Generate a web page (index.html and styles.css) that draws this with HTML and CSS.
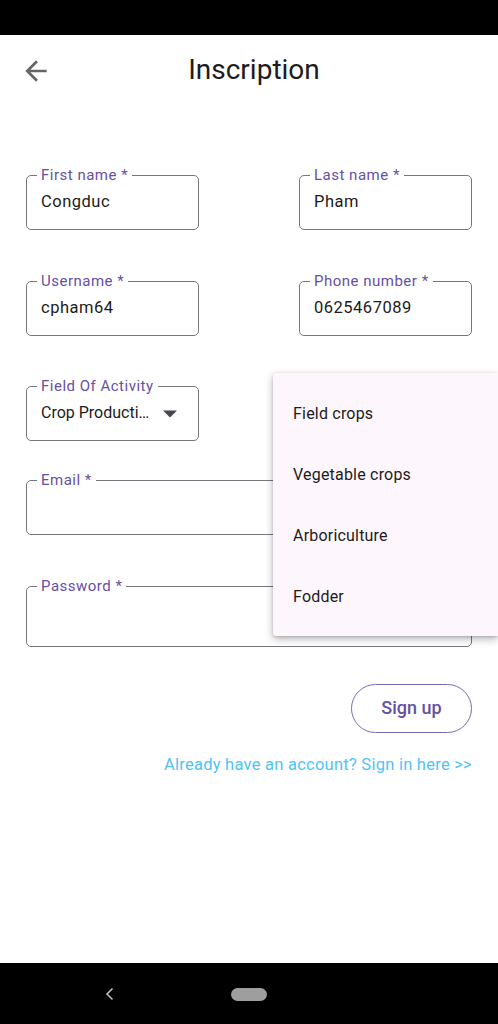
FILE: index.html
```html
<!DOCTYPE html>
<html lang="fr">
<head>
<meta charset="utf-8">
<title>Inscription</title>
<link rel="stylesheet" href="styles.css">
</head>
<body>
<div class="screen">
  <div class="status-bar"></div>
  <main class="app">
    <header class="app-bar">
      <span class="back">
        <svg width="32" height="32" viewBox="0 0 24 24"><path d="M20 11H7.83l5.59-5.59L12 4l-8 8 8 8 1.41-1.41L7.83 13H20v-2z" fill="#666"/></svg>
      </span>
      <h1 class="title">Inscription</h1>
      <span></span>
    </header>

    <form class="form">
      <div class="row row-first">
        <fieldset class="field half">
          <legend>First name *</legend>
          <div class="value">Congduc</div>
        </fieldset>
        <fieldset class="field half">
          <legend>Last name *</legend>
          <div class="value">Pham</div>
        </fieldset>
      </div>
      <div class="row row-2">
        <fieldset class="field half">
          <legend>Username *</legend>
          <div class="value">cpham64</div>
        </fieldset>
        <fieldset class="field half">
          <legend>Phone number *</legend>
          <div class="value">0625467089</div>
        </fieldset>
      </div>
      <div class="row row-3">
        <fieldset class="field half">
          <legend>Field Of Activity</legend>
          <div class="value select">
            <span>Crop Producti…</span>
            <svg class="caret" width="14" height="8" viewBox="0 0 10 5"><path d="M0 0l5 5 5-5z" fill="#49454F"/></svg>
          </div>
        </fieldset>
      </div>
      <div class="row row-4">
        <fieldset class="field full">
          <legend>Email *</legend>
          <div class="value">&nbsp;</div>
        </fieldset>
      </div>
      <div class="row row-5">
        <fieldset class="field full tall">
          <legend>Password *</legend>
          <div class="value">&nbsp;</div>
        </fieldset>
      </div>
      <div class="actions">
        <button type="button" class="signup">Sign up</button>
      </div>
      <div class="signin">Already have an account? Sign in here &gt;&gt;</div>
    </form>

    <ul class="menu">
      <li>Field crops</li>
      <li>Vegetable crops</li>
      <li>Arboriculture</li>
      <li>Fodder</li>
    </ul>
  </main>
  <nav class="nav-bar">
    <svg class="nav-back" width="12" height="14" viewBox="0 0 12 14"><path d="M8.5 1.5L3 7l5.5 5.5" fill="none" stroke="#bdbdbd" stroke-width="1.6"/></svg>
    <span class="home-pill"></span>
  </nav>
</div>
</body>
</html>
```

FILE: styles.css
```css
* { box-sizing: border-box; }
html, body { margin: 0; padding: 0; }
body {
  font-family: Roboto, "Noto Sans", Arial, sans-serif;
  background: #fff;
  color: #1D1B20;
}
.screen {
  width: 498px;
  height: 1024px;
  display: flex;
  flex-direction: column;
}
.status-bar {
  height: 35px;
  background: #000;
  flex: none;
}
.app {
  flex: 1;
  position: relative;
  background: #fff;
}
.app-bar {
  height: 70px;
  display: grid;
  grid-template-columns: 56px 1fr 46px;
  align-items: center;
}
.back {
  display: flex;
  padding-left: 20px;
  padding-top: 1px;
}
.title {
  margin: 0;
  text-align: center;
  font-weight: 400;
  font-size: 28px;
  line-height: 32px;
  color: #1D1B20;
}
.form {
  padding: 0 26px;
  margin-top: 61px;
}
.row {
  display: flex;
  justify-content: space-between;
}
.row-2 { margin-top: 42px; }
.row-3 { margin-top: 41px; }
.row-4 { margin-top: 30px; }
.row-5 { margin-top: 42px; }
.field {
  margin: 0;
  padding: 0 10px 0 10px;
  border: 1px solid #79747E;
  border-radius: 5px;
  min-width: 0;
}
.half { width: 173px; }
.full { width: 446px; }
.field legend {
  padding: 0 4px;
  font-size: 15px;
  line-height: 18px;
  letter-spacing: 0.5px;
  color: #6750A4;
}
.value {
  margin-top: 8px;
  padding: 0 4px 17px;
  font-size: 16.5px;
  line-height: 20px;
  letter-spacing: 0.5px;
  color: #1D1B20;
  white-space: nowrap;
}
.tall .value { padding-bottom: 23px; }
.select {
  display: flex;
  align-items: center;
}
.select span {
  width: 122px;
  overflow: hidden;
  font-size: 16px;
  letter-spacing: 0;
}
.caret { margin-top: 1px; }
.actions {
  display: flex;
  justify-content: flex-end;
  margin-top: 37px;
}
.signup {
  width: 121px;
  height: 49px;
  border: 1.3px solid #7B6AB3;
  border-radius: 25px;
  background: #fff;
  color: #6750A4;
  font-family: Roboto, "Noto Sans", Arial, sans-serif;
  font-size: 18px;
  font-weight: 500;
  padding: 0 0 2px;
}
.signin {
  margin-top: 22px;
  text-align: right;
  font-size: 16.5px;
  line-height: 20px;
  letter-spacing: 0.25px;
  color: #4FC3F7;
}
.menu {
  position: absolute;
  left: 273px;
  top: 338px;
  width: 225px;
  height: 263px;
  margin: 0;
  padding: 10px 0 9px;
  list-style: none;
  background: #FDF7FD;
  border-radius: 3px 0 0 3px;
  box-shadow: 0 3px 8px rgba(0,0,0,0.28), 0 1px 3px rgba(0,0,0,0.15);
}
.menu li {
  height: 61px;
  display: flex;
  align-items: center;
  padding-left: 20px;
  font-size: 16px;
  letter-spacing: 0.2px;
  color: #1D1B20;
}
.nav-bar {
  height: 61px;
  flex: none;
  background: #000;
  display: flex;
  align-items: center;
  padding-left: 104px;
  padding-top: 1px;
}
.home-pill {
  margin-left: 115px;
  width: 36px;
  height: 13px;
  border-radius: 7px;
  background: #9E9E9E;
}
```
